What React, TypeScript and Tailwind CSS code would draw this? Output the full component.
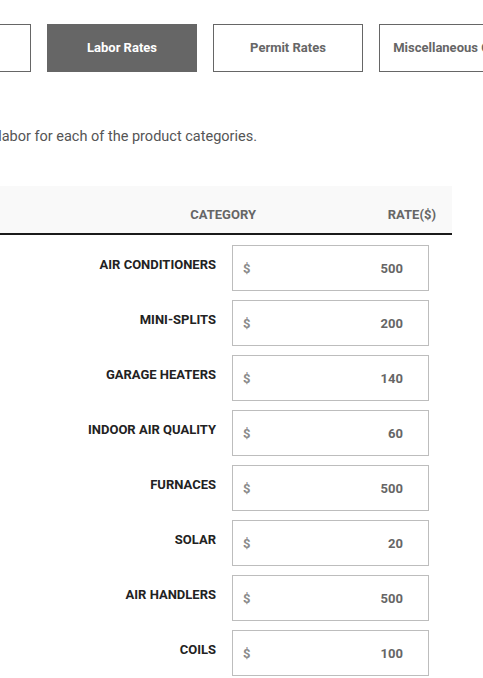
import React from "react";

const rows: [string, number][] = [
  ["AIR CONDITIONERS", 500],
  ["MINI-SPLITS", 200],
  ["GARAGE HEATERS", 140],
  ["INDOOR AIR QUALITY", 60],
  ["FURNACES", 500],
  ["SOLAR", 20],
  ["AIR HANDLERS", 500],
  ["COILS", 100],
];

const tabs = ["Equipment", "Labor Rates", "Permit Rates", "Miscellaneous Costs"];

export default function App() {
  return (
    <div
      className="w-[483px] h-[678px] overflow-hidden bg-white"
      style={{ fontFamily: "Roboto, 'Liberation Sans', sans-serif" }}
    >
      <div className="flex gap-4 pt-[24px] ml-[-119px] w-[700px]">
        {tabs.map((t, i) => (
          <div
            key={t}
            className={
              i === 1
                ? "w-[150px] h-[48px] shrink-0 flex items-center justify-center bg-[#666666] border border-[#666666] text-white text-[13px] font-bold whitespace-nowrap"
                : "w-[150px] h-[48px] shrink-0 flex items-center justify-center bg-white border border-[#666666] text-[#666666] text-[13px] font-bold whitespace-nowrap"
            }
          >
            {t}
          </div>
        ))}
      </div>

      <div className="mt-[55px] w-[257px] flex justify-end">
        <p className="shrink-0 whitespace-nowrap text-[14.5px] leading-[20px] text-[#555555]">
          Enter the cost of labor for each of the product categories.
        </p>
      </div>

      <div className="mt-[39px] w-[452px]">
        <div className="flex h-[49px] items-start pt-[20px] bg-[#f9f9f9] border-b-2 border-[#1a1a1a]">
          <div className="w-[256px] text-right text-[13px] leading-[18px] font-bold text-[#666666]">CATEGORY</div>
          <div className="flex-1 text-right pr-[16px] text-[13px] leading-[18px] font-bold text-[#666666]">RATE($)</div>
        </div>
        <div className="flex flex-col gap-[9px] mt-[10px]">
          {rows.map(([label, value]) => (
            <div key={label} className="flex items-start">
              <div className="w-[216px] pt-[10px] text-right text-[13px] leading-[20px] font-bold text-[#222222] whitespace-nowrap">
                {label}
              </div>
              <div className="ml-[16px] w-[197px] h-[46px] border border-[#bdbdbd] flex items-center pl-[10px] pr-[25px] pt-[2px]">
                <span className="text-[13px] font-bold text-[#8a8a8a]">$</span>
                <span className="flex-1 text-right text-[13px] font-bold text-[#666666]">{value}</span>
              </div>
            </div>
          ))}
        </div>
      </div>
    </div>
  );
}
